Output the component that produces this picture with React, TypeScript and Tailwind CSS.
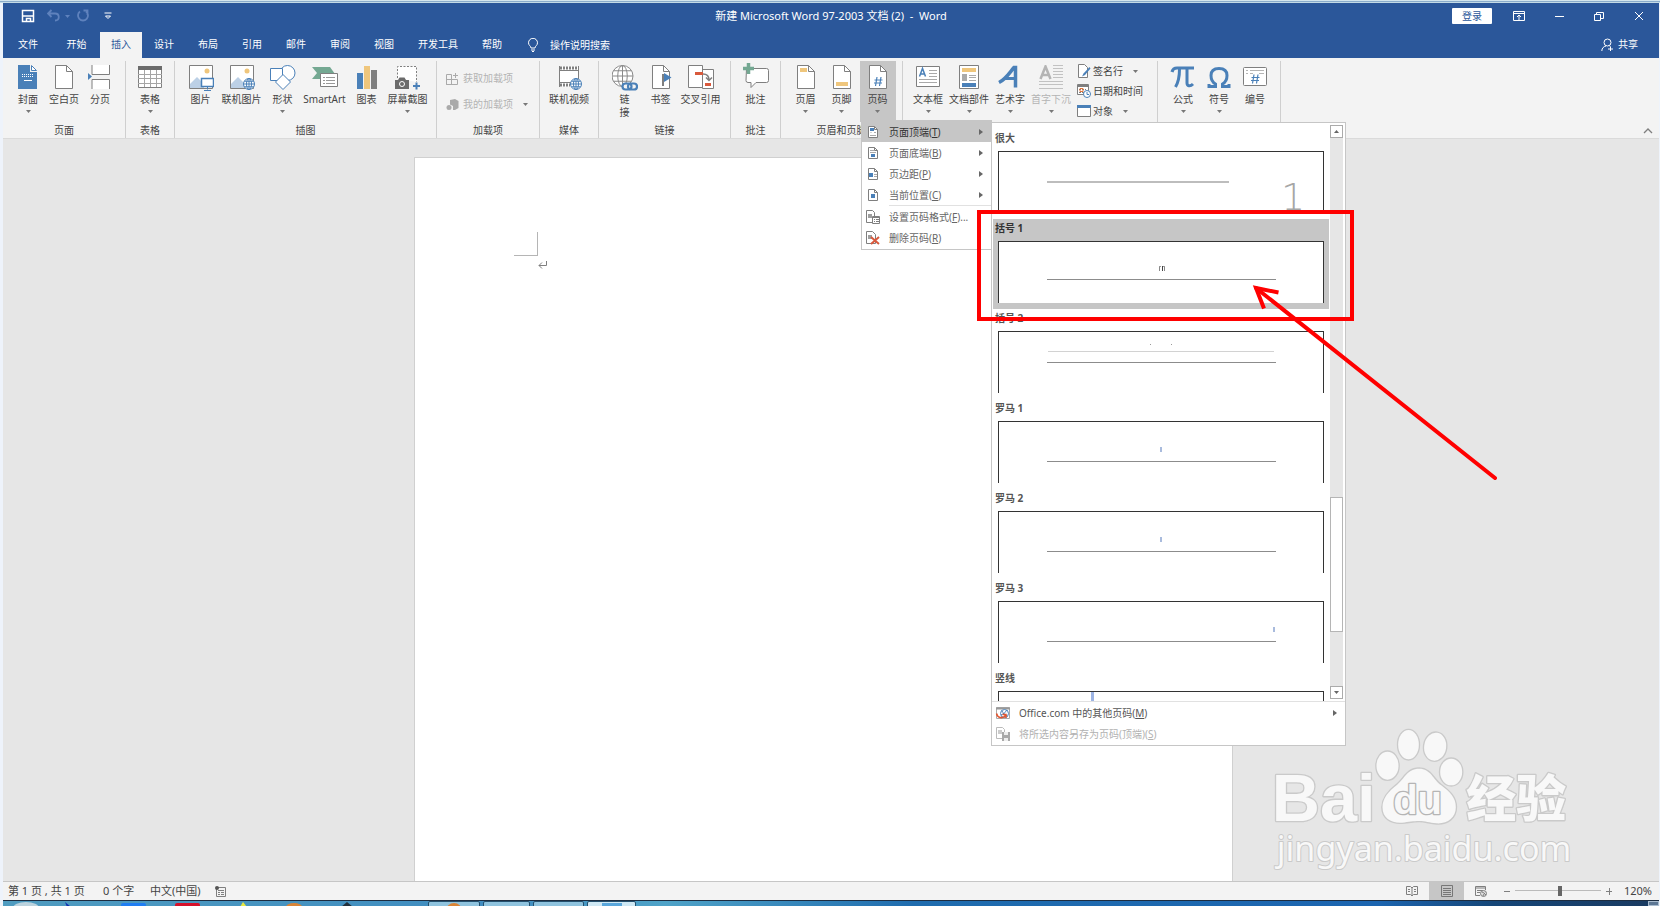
import type { ReactNode } from "react";
import clsx from "clsx";

const BLUE = "#4a80b8";
const GRAY = "#7f7f7f";
const SAND = "#efc67c";
const GREEN = "#74a892";

function Caret({ className }: { className?: string }) {
  return (
    <svg viewBox="0 0 5 3" className={clsx("h-[3px] w-[5px] shrink-0", className)} fill="currentColor">
      <path d="M0 0h5L2.5 3z" />
    </svg>
  );
}

function Icon({ children, className = "size-[26px]", box = 26 }: { children: ReactNode; className?: string; box?: number }) {
  return (
    <svg viewBox={`0 0 ${box} ${box}`} className={clsx("shrink-0", className)} fill="none" stroke={GRAY} strokeWidth="1">
      {children}
    </svg>
  );
}

const pageShape = "M4.5.5h11l6 6v17h-17z";
const pageFold = "M15.5.5v6h6";

function Globe({ cx, cy, r, color }: { cx: number; cy: number; r: number; color: string }) {
  return (
    <g stroke={color} fill="none">
      <circle cx={cx} cy={cy} r={r} fill="#fff" />
      <ellipse cx={cx} cy={cy} rx={r / 2.2} ry={r} />
      <path
        d={`M${cx - r} ${cy}h${2 * r}M${cx} ${cy - r}v${2 * r}M${cx - r * 0.86} ${cy - r / 2}h${r * 1.72}M${cx - r * 0.86} ${cy + r / 2}h${r * 1.72}`}
      />
    </g>
  );
}

const icons = {
  cover: (
    <Icon>
      <path d="M3 0h12v7h7v17H3z" fill={BLUE} stroke="none" />
      <path d="M16.500 .5l5 5h-5z" fill="#fff" stroke={BLUE} />
      <path d="M7 9.500h11M7 11.500h11" stroke="#fff" strokeDasharray="1 1" />
      <path d="M9 15.500h8" stroke="#fff" />
    </Icon>
  ),
  blank: (
    <Icon>
      <path d={pageShape} fill="#fff" />
      <path d={pageFold} />
    </Icon>
  ),
  pageBreak: (
    <Icon>
      <path d="M5 0v9.500h17.500V0M5 24V14.500h17.500V24" fill="#fff" />
      <path d="M1 8l4 3.500L1 15z" fill={BLUE} stroke="none" />
    </Icon>
  ),
  table: (
    <Icon>
      <path d="M1.500 1.500h23v21h-23z" fill="#fff" />
      <path d="M1 1h24v4H1z" fill="#6b6b6b" stroke="none" />
      <path d="M1 9.500h24M1 13.500h24M1 18.500h24M7.500 5v17M13.500 5v17M19.500 5v17" stroke="#a5a5a5" />
    </Icon>
  ),
  picture: (
    <Icon>
      <path d="M1.500.5h23v23h-23z" fill="#fff" />
      <circle cx="19" cy="6" r="2.500" fill={SAND} stroke="none" />
      <path d="M2 23v-4l7-7 7 7v4z" fill="#bcd0e6" stroke="none" />
      <path d="M13.500 13.500h12v8h-12z" fill="#fff" stroke={BLUE} strokeWidth="1.500" />
      <path d="M19.500 22v2.500M16 25.500h7" stroke={BLUE} />
    </Icon>
  ),
  onlinePicture: (
    <Icon>
      <path d="M1.500.5h23v23h-23z" fill="#fff" />
      <circle cx="18" cy="6" r="2.500" fill={SAND} stroke="none" />
      <path d="M2 23v-4l7-7 7 7v4z" fill="#bcd0e6" stroke="none" />
      <Globe cx={20} cy={19} r={5.5} color={BLUE} />
    </Icon>
  ),
  shapes: (
    <Icon>
      <circle cx="17.500" cy="8" r="7.500" fill="#fff" stroke={BLUE} />
      <path d="M.5 3.500h12v12H.5z" fill="#fff" stroke={BLUE} />
      <path d="M13 9.500l7.500 7.500-7.500 7.500L5.500 17z" fill="#fff" stroke={BLUE} />
    </Icon>
  ),
  smartArt: (
    <Icon>
      <path d="M0 2h18l5 7-5 5H0l5-6z" fill={GREEN} stroke="none" />
      <path d="M8.500 8.500h17v13h-17z" fill="#fff" />
      <path d="M11 12.500h2M11 15.500h2M11 18.500h2M14 12.500h9M14 15.500h9M14 18.500h9" stroke="#999" />
    </Icon>
  ),
  chart: (
    <Icon>
      <path d="M3 8h6v16H3z" fill={BLUE} stroke="none" />
      <path d="M10 1h6v23h-6z" fill={SAND} stroke="none" />
      <path d="M17 5h6v19h-6z" fill={GRAY} stroke="none" />
    </Icon>
  ),
  screenshot: (
    <Icon>
      <path d="M2.500 13V1.500h19V17" fill="#fff" strokeDasharray="2 1.500" />
      <path d="M0 15h3l1.500-2.500h5L11 15h3v9H0z" fill="#6b6b6b" stroke="none" />
      <circle cx="7" cy="19" r="2.500" fill="#6b6b6b" stroke="#fff" />
      <path d="M21.500 17.500v7M18 21h7" stroke={BLUE} strokeWidth="2" />
    </Icon>
  ),
  video: (
    <Icon>
      <path d="M3 1.500h20v20H3z" fill="#fff" stroke="none" />
      <path d="M3.500 1v21M22.500 1v15M3 5.500h19.500M3 17.500h12" />
      <path d="M4 3h19M4 20h10" strokeWidth="3" strokeDasharray="2 1" />
      <Globe cx={20} cy={19} r={5.5} color={BLUE} />
    </Icon>
  ),
  link: (
    <Icon>
      <Globe cx={10.5} cy={11} r={10.5} color="#8a8a8a" />
      <g stroke={BLUE} strokeWidth="2.200">
        <rect x="10.500" y="18.500" width="9" height="6" rx="3" fill="#f3f3f3" />
        <rect x="16" y="18.500" width="9" height="6" rx="3" />
      </g>
    </Icon>
  ),
  bookmark: (
    <Icon>
      <path d={pageShape} fill="#fff" />
      <path d={pageFold} />
      <path d="M15 9v12" strokeWidth="2" />
      <path d="M16 8l7.500 4.500L16 17z" fill={BLUE} stroke="none" />
    </Icon>
  ),
  crossRef: (
    <Icon>
      <path d="M14.500 4.500h11v19h-11z" fill="#fff" />
      <path d="M.5.5h14v22H.5z" fill="#fff" />
      <path d="M7 8.500h8M17 19.500h6" stroke="#d9593c" strokeWidth="3" />
      <path d="M15 9c4 0 6 2 6 6M18 12.500l3 3 3-3" strokeWidth="1.500" />
    </Icon>
  ),
  comment: (
    <Icon className="size-[26px] overflow-visible">
      <path d="M3.500 3.500h20a2 2 0 0 1 2 2v10a2 2 0 0 1-2 2H13l-5 5v-5H5a2 2 0 0 1-2-2z" fill="#fff" />
      <path d="M5.500-2v11M0 3.500h11" stroke={GREEN} strokeWidth="3.500" />
    </Icon>
  ),
  header: (
    <Icon>
      <path d={pageShape} fill="#fff" />
      <path d={pageFold} />
      <path d="M7 3h7v4H7z" fill={SAND} stroke="none" />
    </Icon>
  ),
  footer: (
    <Icon>
      <path d={pageShape} fill="#fff" />
      <path d={pageFold} />
      <path d="M7 17h12v4H7z" fill={SAND} stroke="none" />
    </Icon>
  ),
  pageNumber: (
    <Icon>
      <path d={pageShape} fill="#fff" />
      <path d={pageFold} />
      <path d="M12 12l-1.500 9M16 12l-1.500 9M9.500 15h8M9 18h8" stroke={BLUE} strokeWidth="1.200" />
    </Icon>
  ),
  textBox: (
    <Icon>
      <path d="M1.500 1.500h23v20h-23z" fill="#fff" />
      <path d="M4.500 11.500l3-8 3 8M5.500 9h4" stroke={BLUE} strokeWidth="1.500" />
      <path d="M14 5.500h8M14 8.500h8M14 11.500h8M4 14.500h18M4 17.500h18" stroke="#a9a9a9" />
    </Icon>
  ),
  quickParts: (
    <Icon>
      <path d="M3.500.5h19v23h-19z" fill="#fff" />
      <path d="M6 3h14v4H6z" fill={SAND} stroke="none" />
      <path d="M6 9h5v7H6z" fill="#aaa" stroke="none" />
      <path d="M13 10.500h7M13 12.500h7M13 15.500h7" stroke="#aaa" />
      <path d="M6 18h14v4H6z" fill={BLUE} stroke="none" />
    </Icon>
  ),
  wordArt: (
    <Icon>
      <path d="M2 17.500C9 14 13 7 17 2.500h1.500v20" stroke={BLUE} strokeWidth="3.500" />
      <path d="M8 13.500h12" stroke={BLUE} strokeWidth="3" />
    </Icon>
  ),
  dropCap: (
    <Icon>
      <path d="M2.500 14L7.500 1.500 12.500 14M4 10h7" stroke="#b4b4b4" strokeWidth="2.500" />
      <path d="M15 .5h10M15 3.500h10M15 6.500h10M15 9.500h10M15 12.500h10M1 16.500h24M1 19.500h24M1 23.500h24" stroke="#c2c2c2" />
    </Icon>
  ),
  pi: (
    <Icon>
      <path d="M2 7c1-4 3-4 5-4h17" stroke={BLUE} strokeWidth="3.200" />
      <path d="M9.500 4c0 8-1 13-4 18M17 4v14c0 3 3 4 6 1" stroke={BLUE} strokeWidth="3" />
    </Icon>
  ),
  omega: (
    <Icon>
      <path
        d="M3 19v2.500h6.500V19C6 17 5 14 5 10.500 5 6 8 3.500 13 3.500s8 2.500 8 7c0 3.500-1 6.500-4.500 8.500v2.500H23V19"
        stroke={BLUE}
        strokeWidth="3"
      />
    </Icon>
  ),
  numbering: (
    <Icon>
      <rect x="1.500" y="2.500" width="23" height="18" rx="1" fill="#fff" />
      <path d="M4 5.500h2M8 5.500h14M4 8.500h2M8 8.500h3M17 8.500h5" stroke="#b5b5b5" />
      <path d="M12 9.500l-1.500 9M16 9.500l-1.500 9M9.500 12.500h8M9 15.500h8" stroke={BLUE} strokeWidth="1.200" />
    </Icon>
  ),
};

type Tool = { label: string; icon: ReactNode; width: string; arrow?: boolean; disabled?: boolean; active?: boolean };

function ToolButton({ tool }: { tool: Tool }) {
  return (
    <button
      type="button"
      disabled={tool.disabled}
      aria-pressed={tool.active}
      className={clsx(
        "flex h-[61px] shrink-0 flex-col items-center pt-1 text-[#444]",
        tool.width,
        tool.active && "bg-[#c6c6c6]",
        tool.disabled && "text-[#b4b4b4]"
      )}
    >
      {tool.icon}
      <span className="mt-0.5 leading-[13px] whitespace-pre">{tool.label}</span>
      {tool.arrow && <Caret className="mt-1 text-[#777]" />}
    </button>
  );
}

function Group({ label, width, children }: { label: string; width: string; children: ReactNode }) {
  return (
    <section aria-label={label} className={clsx("flex shrink-0 flex-col border-r border-[#cfcfcf]", width)}>
      <div className="flex h-[61px] justify-center">{children}</div>
      <div className="text-center leading-4 text-[#444]">{label}</div>
    </section>
  );
}

const W36 = "w-[36px]";
const W38 = "w-[38px]";
const W44 = "w-[44px]";

const pageTools: Tool[] = [
  { label: "封面", icon: icons.cover, width: W36, arrow: true },
  { label: "空白页", icon: icons.blank, width: W36 },
  { label: "分页", icon: icons.pageBreak, width: W36 },
];

const illustrationTools: Tool[] = [
  { label: "图片", icon: icons.picture, width: W38 },
  { label: "联机图片", icon: icons.onlinePicture, width: W44 },
  { label: "形状", icon: icons.shapes, width: W38, arrow: true },
  { label: "SmartArt", icon: icons.smartArt, width: "w-[46px]" },
  { label: "图表", icon: icons.chart, width: W38 },
  { label: "屏幕截图", icon: icons.screenshot, width: W44, arrow: true },
];

const linkTools: Tool[] = [
  { label: "链\n接", icon: icons.link, width: W36 },
  { label: "书签", icon: icons.bookmark, width: W36 },
  { label: "交叉引用", icon: icons.crossRef, width: W44 },
];

const headerTools: Tool[] = [
  { label: "页眉", icon: icons.header, width: W36, arrow: true },
  { label: "页脚", icon: icons.footer, width: W36, arrow: true },
  { label: "页码", icon: icons.pageNumber, width: W36, arrow: true, active: true },
];

const textTools: Tool[] = [
  { label: "文本框", icon: icons.textBox, width: W38, arrow: true },
  { label: "文档部件", icon: icons.quickParts, width: W44, arrow: true },
  { label: "艺术字", icon: icons.wordArt, width: W38, arrow: true },
  { label: "首字下沉", icon: icons.dropCap, width: W44, arrow: true, disabled: true },
];

const symbolTools: Tool[] = [
  { label: "公式", icon: icons.pi, width: W36, arrow: true },
  { label: "符号", icon: icons.omega, width: W36, arrow: true },
  { label: "编号", icon: icons.numbering, width: W36 },
];

function tools(list: Tool[]) {
  return list.map((tool) => <ToolButton key={tool.label} tool={tool} />);
}

function TitleBar() {
  return (
    <header className="flex h-[29px] items-center pb-[3px] text-white">
      <div className="flex flex-1 items-center">
        <button type="button" aria-label="保存" className="ml-[18px]">
          <Icon box={14} className="size-3.5">
            <path d="M1.500 1.500h11v11h-11z" stroke="#fff" strokeWidth="1.500" />
            <path d="M2 7h10M5.500 13V9.500h4V13" stroke="#fff" strokeWidth="1.500" />
          </Icon>
        </button>
        <button type="button" aria-label="撤消" disabled className="ml-3 flex items-center gap-1 text-[#5f82bd]">
          <Icon box={14} className="size-3.5">
            <path d="M4.500 1L1 4.500 4.500 8M1.500 4.500H8c5 0 5 7 0 7" stroke="#5f82bd" strokeWidth="1.800" />
          </Icon>
          <Caret />
        </button>
        <button type="button" aria-label="重复" disabled className="ml-1.5">
          <Icon box={14} className="size-3.5">
            <path d="M4 2.500a5 5 0 1 0 6 0M7.500 1.500h4V6" stroke="#5f82bd" strokeWidth="1.800" />
          </Icon>
        </button>
        <button type="button" aria-label="自定义快速访问工具栏" className="ml-3.5">
          <Icon box={8} className="size-2">
            <path d="M.5 1h7" stroke="#fff" />
            <path d="M1.500 4h5L4 6.500z" stroke="#fff" />
          </Icon>
        </button>
      </div>
      <h1 className="text-[11px] leading-4 whitespace-pre">新建 Microsoft Word 97-2003 文档 (2)  -  Word</h1>
      <div className="flex flex-1 items-center justify-end">
        <button type="button" className="mr-[7px] h-4 w-10 rounded-[1px] bg-white leading-4 text-[#2b579a]">
          登录
        </button>
        <button type="button" aria-label="功能区显示选项" className="flex w-10 justify-center">
          <Icon box={12} className="size-3">
            <path d="M.5 1.500h11v9H.5zM0 3.500h12M6 10V5.500M4 7l2-2 2 2" stroke="#fff" />
          </Icon>
        </button>
        <button type="button" aria-label="最小化" className="flex w-10 justify-center">
          <Icon box={12} className="size-3">
            <path d="M2 6.500h9" stroke="#fff" />
          </Icon>
        </button>
        <button type="button" aria-label="向下还原" className="flex w-10 justify-center">
          <Icon box={12} className="size-3">
            <path d="M1.500 4.500h6v6h-6zM3.500 4V2.500h7v6H8" stroke="#fff" />
          </Icon>
        </button>
        <button type="button" aria-label="关闭" className="flex w-10 justify-center">
          <Icon box={12} className="size-3">
            <path d="M2 2l8 8M10 2l-8 8" stroke="#fff" />
          </Icon>
        </button>
      </div>
    </header>
  );
}

const tabs = ["设计", "布局", "引用", "邮件", "审阅", "视图", "开发工具", "帮助"];

function TabRow() {
  return (
    <nav className="flex h-[26px] items-stretch text-white">
      <button type="button" className="w-[50px] pb-0.5">文件</button>
      <button type="button" className="w-[47px] pb-0.5">开始</button>
      <button type="button" aria-current="page" className="w-[42px] bg-[#f3f3f3] pb-0.5 text-[#2b579a]">
        插入
      </button>
      {tabs.map((tab) => (
        <button key={tab} type="button" className="px-3 pb-0.5">
          {tab}
        </button>
      ))}
      <label className="ml-3 flex items-center gap-2.5">
        <Icon box={14} className="size-3.5">
          <path d="M5 10C5 8 2.500 7.500 2.500 4.800a4.500 4.500 0 0 1 9 0C11.500 7.500 9 8 9 10zM5 12h4M6 13.500h2" stroke="#fff" />
        </Icon>
        <input
          type="text"
          aria-label="操作说明搜索"
          placeholder="操作说明搜索"
          className="w-24 bg-transparent outline-none placeholder:text-white"
        />
      </label>
      <button type="button" className="mr-[21px] ml-auto flex items-center gap-1 pb-0.5">
        <Icon box={13} className="size-[13px]">
          <circle cx="6.500" cy="4.500" r="3.500" stroke="#fff" />
          <path d="M.8 13c0-3 2-4.500 4.200-5M8 7.500l1 1M9.500 8.500v5M7 11h5" stroke="#fff" />
        </Icon>
        共享
      </button>
    </nav>
  );
}

function Ribbon() {
  return (
    <div className="flex h-[81px] border-b border-[#dadada] bg-[#f3f3f3] pt-[3px]">
      <Group label="页面" width="w-[123px]">{tools(pageTools)}</Group>
      <Group label="表格" width="w-[49px]">
        <ToolButton tool={{ label: "表格", icon: icons.table, width: W36, arrow: true }} />
      </Group>
      <Group label="插图" width="w-[262px]">{tools(illustrationTools)}</Group>
      <Group label="加载项" width="w-[103px]">
        <div className="flex w-full flex-col pt-1 pl-[9px] text-[#b4b4b4]">
          <button type="button" disabled className="flex h-[26px] items-center gap-1">
            <Icon box={13} className="size-[13px]">
              <path d="M.5 2.500h5v10h-5zM.5 7.500h11v5h-11zM9.500 1v5M7 3.500h5" stroke="#aaa" />
            </Icon>
            获取加载项
          </button>
          <button type="button" disabled className="flex h-[26px] items-center gap-1">
            <Icon box={13} className="size-[13px]">
              <path d="M4 2l5-1 3.500 2v7L9 12H7V8L4 6.500z" fill="#aaa" stroke="none" />
              <circle cx="3" cy="9.500" r="2.500" fill="#aaa" stroke="none" />
            </Icon>
            我的加载项
            <Caret className="ml-1.5 text-[#777]" />
          </button>
        </div>
      </Group>
      <Group label="媒体" width="w-[59px]">
        <ToolButton tool={{ label: "联机视频", icon: icons.video, width: W44 }} />
      </Group>
      <Group label="链接" width="w-[132px]">{tools(linkTools)}</Group>
      <Group label="批注" width="w-[50px]">
        <ToolButton tool={{ label: "批注", icon: icons.comment, width: W36 }} />
      </Group>
      <Group label="页眉和页脚" width="w-[122px]">{tools(headerTools)}</Group>
      <Group label="文本" width="w-[255px]">
        {tools(textTools)}
        <div className="ml-1 flex w-[74px] flex-col text-[#444]">
          <button type="button" className="flex h-5 items-center gap-0.5">
            <Icon box={14} className="size-3.5">
              <path d="M1.500.5h6l3 3v10h-9z" fill="#fff" />
              <path d="M12.500 3l-6 6.500-1.500 3 3-1.500 5.500-6.500z" fill={BLUE} stroke="none" />
            </Icon>
            签名行
            <Caret className="ml-2 text-[#777]" />
          </button>
          <button type="button" className="flex h-5 items-center gap-0.5">
            <Icon box={14} className="size-3.5">
              <path d="M.5.5h11v10H.5z" fill="#fff" />
              <path d="M0 2h12" strokeWidth="2" />
              <path d="M2 5.500h7M2 8.500h5" strokeDasharray="2 1" />
              <path d="M3 4.500h3v3H3z" stroke="#e0733a" />
              <circle cx="10" cy="10" r="3.500" fill="#fff" stroke={BLUE} />
              <path d="M10 8v2.500h2" stroke={BLUE} />
            </Icon>
            日期和时间
          </button>
          <button type="button" className="flex h-5 items-center gap-0.5">
            <Icon box={14} className="size-3.5">
              <path d="M.5 1.500h13v11H.5z" fill="#fff" />
              <path d="M0 2.500h14" stroke={BLUE} strokeWidth="3" />
            </Icon>
            对象
            <Caret className="ml-2 text-[#777]" />
          </button>
        </div>
      </Group>
      <Group label="符号" width="w-[123px]">{tools(symbolTools)}</Group>
      <button type="button" aria-label="折叠功能区" className="mr-1.5 mb-0.5 ml-auto self-end">
        <Icon box={10} className="size-2.5">
          <path d="M1 7l4-4 4 4" strokeWidth="1.300" />
        </Icon>
      </button>
    </div>
  );
}

function MiniPage({ mark }: { mark: ReactNode }) {
  return (
    <Icon box={16} className="size-4">
      <path d="M3.500 2.500h6l3 3v8h-9z" fill="#fff" />
      <path d="M9.500 2.500v3h3" />
      {mark}
    </Icon>
  );
}

const dots = "M5.500 8.500h1M9 8.500h2M5 11.500h6";

const positionItems = [
  { label: "页面顶端", key: "T", mark: <><path d="M5 5.500h4" stroke={BLUE} strokeWidth="3" /><path d={dots} stroke="#aaa" /></> },
  { label: "页面底端", key: "B", mark: <><path d="M5 5.500h4M5 7.500h6" stroke="#aaa" /><path d="M6 10.500h4" stroke={BLUE} strokeWidth="3" /></> },
  { label: "页边距", key: "P", mark: <><path d="M9 8.500h3M9 10.500h3" stroke="#aaa" /><path d="M4 9h4" stroke={BLUE} strokeWidth="4" /></> },
  { label: "当前位置", key: "C", mark: <path d="M6 9h4" stroke={BLUE} strokeWidth="4" /> },
];

function MenuRow({ icon, label, accel, suffix, arrow, active }: { icon: ReactNode; label: string; accel: string; suffix?: string; arrow?: boolean; active?: boolean }) {
  return (
    <button
      type="button"
      role="menuitem"
      className={clsx("flex h-[21px] w-full items-center pr-2 pl-[3px]", active && "bg-[#c6c6c6] text-[#333]")}
    >
      {icon}
      <span className="ml-2 whitespace-nowrap">
        {label}(<u>{accel}</u>){suffix}
      </span>
      {arrow && (
        <svg viewBox="0 0 4 6" className="ml-auto h-1.5 w-1 text-[#666]" fill="currentColor">
          <path d="M0 0l4 3-4 3z" />
        </svg>
      )}
    </button>
  );
}

function PageNumberMenu() {
  return (
    <div role="menu" aria-label="页码" className="absolute top-[120px] left-[861px] w-[131px] border border-[#c6c6c6] bg-white pb-px text-[#666]">
      {positionItems.map((item, i) => (
        <MenuRow key={item.key} icon={<MiniPage mark={item.mark} />} label={item.label} accel={item.key} arrow active={i === 0} />
      ))}
      <div className="ml-[27px] h-px bg-[#e1e1e1]" />
      <MenuRow
        icon={
          <Icon box={16} className="size-4">
            <path d="M1.500 1.500h6l2 2v10h-8z" fill="#fff" />
            <path d="M4 5v4M6 5v4M3 6h4M3 8h4" />
            <path d="M7.500 7.500h7v7h-7z" fill="#fff" />
            <path d="M7 8.500h8M9 10.500h1M11 10.500h3M9 12.500h1M11 12.500h3" />
          </Icon>
        }
        label="设置页码格式"
        accel="F"
        suffix="..."
      />
      <MenuRow
        icon={
          <Icon box={16} className="size-4">
            <path d="M1.500 1.500h6l3 3v9h-9z" fill="#fff" />
            <path d="M4 5v4M6 5v4M3 6h4M3 8h4" />
            <path d="M6 7l8 7M14 7l-8 7" stroke="#d9593c" strokeWidth="2" />
          </Icon>
        }
        label="删除页码"
        accel="R"
      />
    </div>
  );
}

type Preview = { name: string; selected?: boolean; drawing: ReactNode };

const romanRule = <path d="M48 39.500h229" stroke="#8c8c8c" />;

const previews: Preview[] = [
  {
    name: "很大",
    drawing: (
      <>
        <path d="M48 30h182" stroke="#bdbdbd" strokeWidth="2" />
        <text x="282" y="58" fontSize="38" fontFamily="DejaVu Sans" fontWeight="200" fill="#a6a6a6">1</text>
      </>
    ),
  },
  {
    name: "括号 1",
    selected: true,
    drawing: (
      <>
        <path d="M160.500 24v5M165.500 24v5" stroke="#888" />
        <path d="M163.500 24v5" stroke="#444" />
        <path d="M160 24.500h2M164 24.500h2" stroke="#999" />
        <path d="M48 37.500h229" stroke="#8c8c8c" />
      </>
    ),
  },
  {
    name: "括号 2",
    drawing: (
      <>
        <path d="M151 12.500h1M172 12.500h1" stroke="#999" />
        <path d="M49 19.500h226" stroke="#d2d2d2" />
        <path d="M48 30.500h229" stroke="#8c8c8c" />
      </>
    ),
  },
  {
    name: "罗马 1",
    drawing: (
      <>
        <path d="M162 25v5" stroke="#a9bbdd" strokeWidth="2" />
        {romanRule}
      </>
    ),
  },
  {
    name: "罗马 2",
    drawing: (
      <>
        <path d="M162 25v5" stroke="#a9bbdd" strokeWidth="2" />
        {romanRule}
      </>
    ),
  },
  {
    name: "罗马 3",
    drawing: (
      <>
        <path d="M275 25v5" stroke="#a9bbdd" strokeWidth="2" />
        {romanRule}
      </>
    ),
  },
  { name: "竖线", drawing: <path d="M93.500 0v60" stroke="#9db4e4" strokeWidth="3" /> },
];

function PreviewGallery() {
  return (
    <div role="menu" aria-label="页面顶端" className="absolute top-[122px] left-[991px] w-[355px] border border-[#c6c6c6] bg-white text-[#555]">
      <div className="flex h-[579px] border-b border-[#e1e1e1] pr-0.5">
        <div className="flex-1 overflow-hidden pt-[6px] pl-px">
          {previews.map((p) => (
            <button
              key={p.name}
              type="button"
              className={clsx("flex h-[90px] w-full flex-col px-[5px] text-left", p.selected && "bg-[#c6c6c6] text-[#333]")}
            >
              <span className="-ml-[3px] h-[22px] leading-[18px] font-bold">{p.name}</span>
              <span className="w-full border-x border-t border-[#333] bg-white">
                <svg viewBox="0 0 324 61" className="block h-[61px] w-full" fill="none">
                  {p.drawing}
                </svg>
              </span>
            </button>
          ))}
        </div>
        <div className="my-0.5 ml-px flex w-[13px] flex-col bg-[#e6e6e6]">
          <button type="button" aria-label="向上" className="flex h-[13px] items-center justify-center border border-[#ababab] bg-white text-[#666]">
            <Caret className="rotate-180" />
          </button>
          <div className="mt-[359px] h-[135px] border border-[#b5b5b5] bg-white" />
          <button type="button" aria-label="向下" className="mt-auto flex h-[13px] items-center justify-center border border-[#ababab] bg-white text-[#666]">
            <Caret />
          </button>
        </div>
      </div>
      <MenuRow
        icon={
          <Icon box={16} className="size-4">
            <path d="M1.500 2.500h13v11h-13z" fill="#fff" stroke="#aaa" />
            <path d="M1 3.500h14" stroke="#999" strokeWidth="2" />
            <circle cx="9.500" cy="8.500" r="4" fill="#fff" stroke={BLUE} />
            <path d="M6 10c2-1 5-3 6-5M7 6c1 2 3 4 5 5" stroke={BLUE} />
            <path d="M1.500 8.500c1 4.500 6 5.500 9 2M7.500 9.500h3.500V13" stroke="#e2552f" strokeWidth="1.500" />
          </Icon>
        }
        label="Office.com 中的其他页码"
        accel="M"
        arrow
      />
      <div className="pb-px text-[#b1b1b1]">
        <MenuRow
          icon={
            <Icon box={16} className="size-4">
              <path d="M1.500 1.500h6l2 2v9h-8zM3 5h4M3 7h4M4 4v4M6 4v4" stroke="#bbb" />
              <path d="M7 6h8v9H7z" fill="#a9a9a9" stroke="none" />
              <path d="M9 6h4v3H9zM9 12h4v3H9z" fill="#eee" stroke="none" />
            </Icon>
          }
          label="将所选内容另存为页码(顶端)"
          accel="S"
        />
      </div>
    </div>
  );
}

function Watermark() {
  return (
    <svg viewBox="150 45 920 450" className="absolute top-[725px] left-[1270px] h-[150px] w-[307px]" aria-label="Baidu 经验">
      <g fill="#f8f8f8" stroke="#cacaca" strokeWidth="8" strokeLinejoin="round" paintOrder="stroke">
        <text x="155" y="333" fontSize="200" fontWeight="bold" fontFamily="Liberation Sans">Bai</text>
        <ellipse cx="502" cy="167" rx="33" ry="42" />
        <ellipse cx="565" cy="104" rx="31" ry="44" />
        <ellipse cx="645" cy="110" rx="33" ry="42" transform="rotate(8 645 110)" />
        <ellipse cx="693" cy="186" rx="33" ry="40" />
        <path d="M597 176c-36 0-44 30-66 48-26 20-44 40-44 68 0 34 28 48 58 46 22-2 34-5 52-5s30 5 52 7c32 2 58-16 58-48 0-30-18-46-44-66-24-18-32-50-66-50z" />
        <text x="519" y="311" fontSize="120" fontWeight="bold" fontFamily="Liberation Sans" stroke="#b5b5b5">du</text>
        <text x="738" y="322" fontSize="150" fontWeight="900" fontFamily="Noto Sans CJK SC">经验</text>
        <text x="170" y="452" fontSize="102" fontFamily="Noto Sans" strokeWidth="6">jingyan.baidu.com</text>
      </g>
    </svg>
  );
}

function Annotation() {
  return (
    <>
      <div className="pointer-events-none absolute top-[210px] left-[977px] h-[111px] w-[377px] border-4 border-[#f00]" />
      <svg viewBox="1240 270 270 220" className="pointer-events-none absolute top-[270px] left-[1240px] h-[220px] w-[270px]" fill="none" stroke="#f00" strokeWidth="4">
        <path d="M1495 478L1256 288" strokeLinecap="round" />
        <path d="M1264 308.500l-8-20.500 22.500 4.500" />
      </svg>
    </>
  );
}

function StatusBar() {
  return (
    <footer className="flex h-[19px] items-center border-t border-[#c6c6c6] bg-[#f3f3f3] pb-px pl-[5px] text-[11px] text-[#444]">
      <span className="w-[95px] whitespace-nowrap">第 1 页 , 共 1 页</span>
      <span className="w-[47px] whitespace-nowrap">0 个字</span>
      <span className="w-[64px] whitespace-nowrap">中文(中国)</span>
      <Icon box={12} className="size-3">
        <path d="M2.500 2.500h9v9h-9zM4 5.500h6M4 7.500h2M7 7.500h3M4 9.500h2M7 9.500h3" />
        <circle cx="3" cy="3" r="2" fill="#555" stroke="none" />
      </Icon>
      <div className="ml-auto flex items-center">
        <button type="button" aria-label="阅读视图" className="flex h-[18px] w-[34px] items-center justify-center">
          <Icon box={12} className="size-3">
            <path d="M.5 1.500h4L6 3l1.500-1.500h4v8h-4L6 11 4.500 9.500h-4zM6 3v8M2 4.500h2M2 6.500h2M8 4.500h2M8 6.500h2" />
          </Icon>
        </button>
        <button type="button" aria-label="页面视图" className="flex h-[18px] w-[35px] items-center justify-center bg-[#c6c6c6]">
          <Icon box={12} className="size-3">
            <path d="M.5.500h11v11H.5zM2 3.500h8M2 5.500h8M2 7.500h8M2 9.500h8" stroke="#777" />
          </Icon>
        </button>
        <button type="button" aria-label="Web 版式视图" className="flex h-[18px] w-[34px] items-center justify-center">
          <Icon box={12} className="size-3">
            <path d="M5 10.500H.5v-9h10V5M0 3h11M2 5.500h6M2 7.500h3" />
            <circle cx="8.500" cy="8.500" r="3" fill="#ddd" />
            <path d="M7 7l2 1 2 2M8 11l1-2" />
          </Icon>
        </button>
        <button type="button" aria-label="缩小" className="flex w-[17px] justify-center">
          <Icon box={8} className="size-2">
            <path d="M1 4.500h6" />
          </Icon>
        </button>
        <input
          type="range"
          aria-label="显示比例"
          defaultValue={53}
          className="h-3 w-[86px] appearance-none bg-[linear-gradient(#bbb,#bbb)] bg-[length:100%_1px] bg-center bg-no-repeat [&::-webkit-slider-thumb]:h-2.5 [&::-webkit-slider-thumb]:w-1 [&::-webkit-slider-thumb]:appearance-none [&::-webkit-slider-thumb]:bg-[#666]"
        />
        <button type="button" aria-label="放大" className="flex w-[15px] justify-center">
          <Icon box={8} className="size-2">
            <path d="M1 4.500h6M4.500 1v7" />
          </Icon>
        </button>
        <span className="w-[43px] pr-[7px] text-right">120%</span>
      </div>
    </footer>
  );
}

const openWindows = ["w-[52px]", "w-[47px]", "w-[51px]", "w-[49px]"];

function Taskbar() {
  return (
    <div className="relative flex h-[6px] gap-[3px] overflow-hidden border-t border-[#1c2c40] bg-[linear-gradient(90deg,#4f9cc0,#3f8cc0_30%,#4fa3c8_40%,#1f6cae_55%,#1c65b0_83%,#154678_90%,#1a3a60)] pl-[425px]">
      <svg viewBox="3 0 660 6" className="absolute top-0 left-0 h-[6px] w-[660px]">
        <ellipse cx="26" cy="7" rx="13" ry="6" fill="#bcd3de" />
        <path d="M65 1l6 5h-4z" fill="#1030b0" />
        <rect x="121" y="2" width="25" height="6" rx="2" fill="#1f7df2" />
        <rect x="175" y="2" width="25" height="6" rx="2" fill="#d5102a" />
        <path d="M240 6l3-5 4 5z" fill="#e8e840" />
        <ellipse cx="294" cy="6" rx="8" ry="4" fill="#d98436" />
        <path d="M341 6l6-5 6 5z" fill="#22303c" />
      </svg>
      {openWindows.map((width, i) => (
        <div key={width} className={clsx("relative h-2 rounded-t-[2px] border border-[#24506e]", width, i === 3 ? "bg-[#cfe8f4]" : "bg-[#8fc3de]")}>
          {i === 0 && <div className="mx-auto mt-px h-2 w-4 rounded-t-full bg-[#d98436]" />}
          {i === 3 && <div className="mx-auto mt-px h-2 w-5 bg-[#5aa7dc]" />}
        </div>
      ))}
      <div className="ml-auto w-[11px] border border-[#a9bccf] bg-[#5d7794]" />
    </div>
  );
}

export default function App() {
  return (
    <div className="relative flex min-h-screen flex-col overflow-hidden bg-[#eef3fb] font-['Noto_Sans','Noto_Sans_CJK_SC',sans-serif] text-[10px] leading-4">
      <div className="h-[3px] border-b border-[#c4dbe6] bg-[linear-gradient(#d4e6ee_33%,#8aaccb_33%)]" />
      <div className="mr-px ml-[3px] flex flex-1 flex-col">
        <div className="bg-[#2b579a]">
          <TitleBar />
          <TabRow />
        </div>
        <Ribbon />
        <main className="flex flex-1 justify-center bg-[#e6e6e6] pt-[18px] pr-[15px]">
          <article className="w-full max-w-[819px] border border-b-0 border-[#d0d0d0] bg-white pt-[74px] pl-[99px]">
            <div className="size-6 border-r border-b border-[#b5b5b5]" />
            <Icon box={10} className="mt-1 ml-6 size-2.5">
              <path d="M8.500 1v4.500H1M4 2.500l-3 3 3 3" />
            </Icon>
          </article>
        </main>
        <StatusBar />
        <Taskbar />
      </div>
      <PageNumberMenu />
      <PreviewGallery />
      <Watermark />
      <Annotation />
    </div>
  );
}
